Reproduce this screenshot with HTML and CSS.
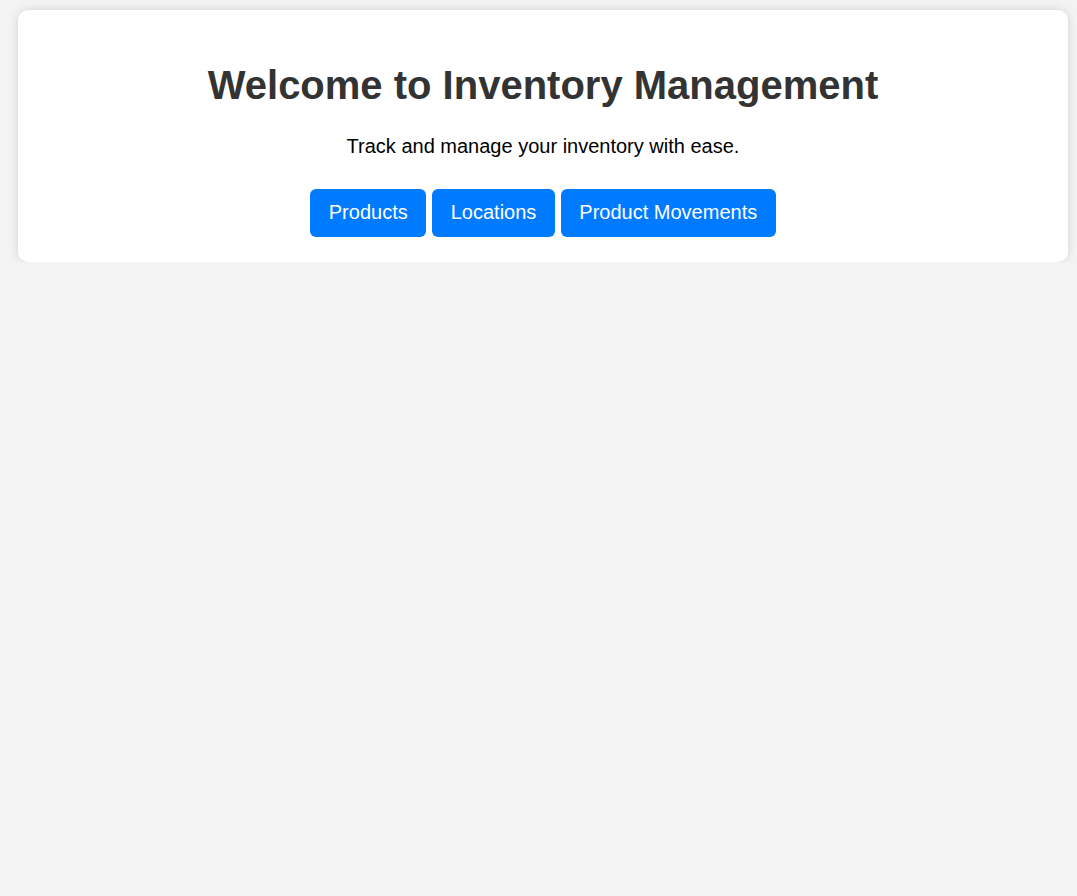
FILE: index.html
```html
<!DOCTYPE html>
<html lang="en">
<head>
<meta charset="utf-8">
<title>Inventory Management</title>
<link rel="stylesheet" href="styles.css">
</head>
<body>
<div class="container">
  <h1 class="title">Welcome to Inventory Management</h1>
  <p class="subtitle">Track and manage your inventory with ease.</p>
  <div class="actions">
    <a class="btn" href="#">Products</a>
    <a class="btn" href="#">Locations</a>
    <a class="btn" href="#">Product Movements</a>
  </div>
</div>
</body>
</html>
```
FILE: styles.css
```css
html, body {
  background: #f3f3f3;
}
body {
  margin: 0;
  padding: 10px 0 0 18px;
  font-family: "Liberation Sans", Arial, sans-serif;
}
.container {
  box-sizing: border-box;
  width: 1050px;
  background: #fff;
  border-radius: 10px;
  box-shadow: 0 0 10px rgba(0, 0, 0, 0.13);
  padding: 24px 20px 25px;
  text-align: center;
}
.title {
  margin: 28px 0 0;
  font-size: 40px;
  font-weight: bold;
  line-height: 46px;
  color: #333;
}
.subtitle {
  margin: 27px 0 0;
  font-size: 20px;
  line-height: 23px;
  color: #000;
}
.actions {
  margin-top: 31px;
  display: flex;
  justify-content: center;
  gap: 6px;
}
.btn {
  display: block;
  background: #007bff;
  color: #fff;
  text-decoration: none;
  font-size: 20px;
  line-height: 23px;
  padding: 12px 18.5px 13px;
  border-radius: 6px;
}
```
